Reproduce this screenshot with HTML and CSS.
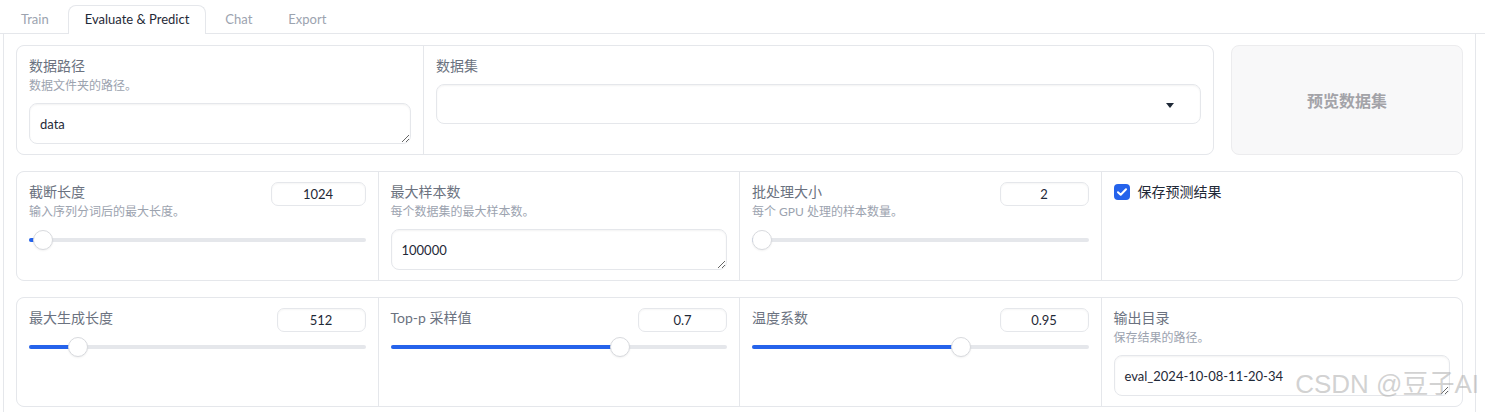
FILE: index.html
```html
<!DOCTYPE html>
<html lang="zh">
<head>
  <meta charset="UTF-8">
  <meta name="viewport" content="width=device-width, initial-scale=1">
  <title>Evaluate &amp; Predict</title>
  <link rel="stylesheet" href="styles.css">
</head>
<body>

<div class="tabs">
  <div class="tab-nav">
    <button class="tab">Train</button>
    <button class="tab selected">Evaluate &amp; Predict</button>
    <button class="tab">Chat</button>
    <button class="tab">Export</button>
  </div>

  <div class="tab-panel">
    <!-- 数据 -->
    <div class="row">
      <div class="group g-data">
        <div class="block">
          <div class="title">数据路径</div>
          <div class="info">数据文件夹的路径。</div>
          <textarea class="input" rows="1">data</textarea>
        </div>
        <div class="block">
          <div class="title">数据集</div>
          <div class="dropdown">
            <span class="arrow"></span>
          </div>
        </div>
      </div>
      <button class="preview">预览数据集</button>
    </div>

    <!-- 参数 1 -->
    <div class="group g-four">
      <div class="block">
        <div class="head">
          <div>
            <div class="title">截断长度</div>
            <div class="info">输入序列分词后的最大长度。</div>
          </div>
          <input class="num wide" type="text" value="1024">
        </div>
        <div class="slider" style="--p: 0.014">
          <div class="fill"></div>
          <div class="thumb"></div>
        </div>
      </div>
      <div class="block">
        <div class="title">最大样本数</div>
        <div class="info">每个数据集的最大样本数。</div>
        <textarea class="input" rows="1">100000</textarea>
      </div>
      <div class="block">
        <div class="head">
          <div>
            <div class="title">批处理大小</div>
            <div class="info">每个 GPU 处理的样本数量。</div>
          </div>
          <input class="num" type="text" value="2">
        </div>
        <div class="slider" style="--p: 0">
          <div class="fill"></div>
          <div class="thumb"></div>
        </div>
      </div>
      <div class="block">
        <label class="check">
          <span class="box">
            <svg width="10" height="8" viewBox="0 0 10 8"><path d="M1 4.2 3.7 6.8 9 1.2" fill="none" stroke="#fff" stroke-width="2" stroke-linecap="round" stroke-linejoin="round"/></svg>
          </span>
          保存预测结果
        </label>
      </div>
    </div>

    <!-- 参数 2 -->
    <div class="group g-four">
      <div class="block">
        <div class="head">
          <div class="title">最大生成长度</div>
          <input class="num" type="text" value="512">
        </div>
        <div class="slider" style="--p: 0.122">
          <div class="fill"></div>
          <div class="thumb"></div>
        </div>
      </div>
      <div class="block">
        <div class="head">
          <div class="title">Top-p 采样值</div>
          <input class="num" type="text" value="0.7">
        </div>
        <div class="slider" style="--p: 0.694">
          <div class="fill"></div>
          <div class="thumb"></div>
        </div>
      </div>
      <div class="block">
        <div class="head">
          <div class="title">温度系数</div>
          <input class="num" type="text" value="0.95">
        </div>
        <div class="slider" style="--p: 0.63">
          <div class="fill"></div>
          <div class="thumb"></div>
        </div>
      </div>
      <div class="block">
        <div class="title">输出目录</div>
        <div class="info">保存结果的路径。</div>
        <textarea class="input" rows="1">eval_2024-10-08-11-20-34</textarea>
      </div>
    </div>
  </div>
</div>

<div class="watermark">CSDN @豆子AI</div>

</body>
</html>
```

FILE: styles.css
```css
* { box-sizing: border-box; }
body {
  margin: 0;
  font-family: Lato, "Noto Sans CJK SC", sans-serif;
  font-size: 14px;
  color: #1f2937;
  background: #fff;
  position: relative;
  height: 412px;
  overflow: hidden;
}

/* tabs */
.tab-nav {
  display: flex;
  gap: 2px;
  height: 34px;
  padding: 5px 0 0 4px;
  border-bottom: 1px solid #e5e7eb;
}

.tab {
  height: 29px;
  padding: 0 16px 2px;
  border: 1px solid transparent;
  border-bottom: none;
  background: none;
  font: inherit;
  font-size: 13px;
  color: #9ca3af;
  cursor: pointer;
}

.tab.selected {
  color: #1f2937;
  background: #fff;
  border-color: #e5e7eb;
  border-radius: 8px 8px 0 0;
}

.tab-panel {
  width: 1473px;
  margin-left: 3px;
  border: 1px solid #e5e7eb;
  border-top: none;
  padding: 11px 12px 10px;
  display: flex;
  flex-direction: column;
  gap: 16px;
}

/* rows / groups */
.row {
  display: flex;
  gap: 17px;
}

.group {
  display: grid;
  gap: 1px;
  background: #e5e7eb;
  border: 1px solid #e5e7eb;
  border-radius: 8px;
  overflow: hidden;
}

.g-data {
  flex: 1;
  grid-template-columns: 406px 1fr;
}

.g-four { grid-template-columns: repeat(4, 1fr); }

.block {
  background: #fff;
  padding: 10px 12px;
}

.title {
  color: #6b7280;
  line-height: 20px;
}

.info {
  color: #9ca3af;
  font-size: 12px;
  line-height: 18px;
  margin: 1px 0 4px;
}

.input {
  display: block;
  width: 100%;
  height: 41px;
  margin-top: 8px;
  padding: 10px;
  border: 1px solid #e5e7eb;
  border-radius: 8px;
  box-shadow: inset 0 1px 2px rgba(0,0,0,0.05);
  font: inherit;
  font-size: 13px;
  color: #1f2937;
  line-height: 20px;
  resize: vertical;
  overflow: hidden;
}

.dropdown {
  position: relative;
  height: 40px;
  margin-top: 8px;
  border: 1px solid #e5e7eb;
  border-radius: 8px;
  box-shadow: inset 0 1px 2px rgba(0,0,0,0.05);
}

.dropdown .arrow {
  position: absolute;
  right: 26px;
  top: 18px;
  border-left: 4px solid transparent;
  border-right: 4px solid transparent;
  border-top: 5px solid #1f2937;
}

.preview {
  width: 232px;
  border: 1px solid #ececee;
  border-radius: 8px;
  background: #f8f8f9;
  color: #a3a3a8;
  font: inherit;
  font-size: 16px;
  font-weight: 600;
}

/* slider */
.head {
  display: flex;
  justify-content: space-between;
  align-items: flex-start;
}

.num {
  width: 89px;
  height: 24px;
  border: 1px solid #e5e7eb;
  border-radius: 7px;
  text-align: center;
  font: inherit;
  font-size: 13px;
  color: #1f2937;
  box-shadow: inset 0 1px 2px rgba(0,0,0,0.04);
}

.num.wide { width: 95px; }

.slider {
  position: relative;
  height: 20px;
  margin-top: 5px;
}

.slider::before {
  content: "";
  position: absolute;
  left: 0;
  right: 0;
  top: 8px;
  height: 4px;
  border-radius: 2px;
  background: #e5e7eb;
}

.fill {
  position: absolute;
  left: 0;
  top: 8px;
  height: 4px;
  border-radius: 2px;
  background: #2563eb;
  width: calc(10px + var(--p) * (100% - 20px));
}

.thumb {
  position: absolute;
  top: 0;
  left: calc(var(--p) * (100% - 20px));
  width: 20px;
  height: 20px;
  border-radius: 50%;
  background: #fff;
  border: 1px solid #d8dade;
  box-shadow: 0 1px 2px rgba(0,0,0,0.06);
}

/* checkbox */
.check {
  display: flex;
  align-items: center;
  gap: 8px;
  line-height: 20px;
  color: #1f2937;
}

.check .box {
  width: 16px;
  height: 16px;
  border-radius: 4px;
  background: #2563eb;
  display: flex;
  align-items: center;
  justify-content: center;
}

.watermark {
  position: absolute;
  right: 6px;
  bottom: 12px;
  font-family: "Liberation Sans", "Noto Sans CJK SC", sans-serif;
  font-size: 26px;
  color: rgba(165,165,165,0.5);
  pointer-events: none;
}
```
